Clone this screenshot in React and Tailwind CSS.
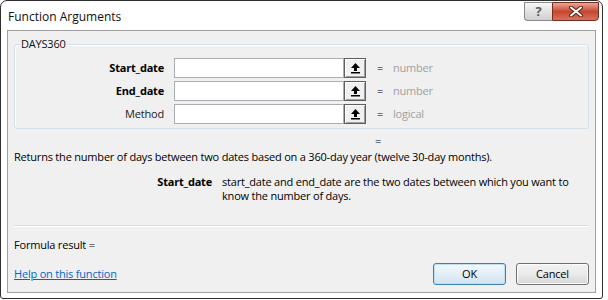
import React from "react";

const UpArrow = () => (
  <svg width="9" height="11" viewBox="0 0 9 11">
    <path d="M4.5 0 L9 5 H6 V8 H3 V5 H0 Z" fill="#000" />
    <rect x="0" y="9" width="9" height="1.5" fill="#000" />
  </svg>
);

const ArgRow = ({ label, bold, value }) => (
  <div className="flex items-center h-[20px]">
    <div className={`w-[149px] text-right ${bold ? "font-bold" : "text-[#222]"}`}>{label}</div>
    <div className="ml-[10px] w-[170px] h-[20px] border border-[#abadb3] bg-white"></div>
    <div className="w-[22px] h-[20px] border border-[#5f5f5f] bg-[#f0f0f0] shadow-[inset_1px_1px_0_#fff,inset_-1px_-1px_0_#a0a0a0] flex items-center justify-center">
      <UpArrow />
    </div>
    <div className="ml-[11px] w-[6px] text-center">=</div>
    <div className="ml-[10px] text-[#a0a0a0]">{value}</div>
  </div>
);

export default function App() {
  return (
    <div className="w-[608px] h-[300px] bg-white font-[family-name:'Open_Sans',sans-serif] text-[11px] tracking-[-0.2px] text-black leading-[14px]">
      <div className="w-[603px] h-[299px] border border-[#2f2f2f] rounded-t-[7px] rounded-b-[3px] bg-white flex flex-col">
        {/* Title bar */}
        <div className="h-[29px] flex items-start justify-between">
          <div className="pl-[7px] pt-[9px] text-[12px] tracking-normal text-[#111]">Function Arguments</div>
          <div className="flex mr-[3px] mt-[1px]">
            <div className="w-[28px] h-[19px] border border-[#8a8a8a] border-r-0 rounded-bl-[4px] bg-gradient-to-b from-[#f7f7f7] via-[#e2e2e2] to-[#cfcfcf] flex items-center justify-center text-[13px] font-bold text-[#5a5a5a] leading-none">
              ?
            </div>
            <div className="w-[47px] h-[19px] border border-[#7a2b20] rounded-br-[4px] bg-gradient-to-b from-[#e9a696] via-[#c8452f] to-[#d5725c] flex items-center justify-center">
              <svg width="14" height="11" viewBox="0 0 14 11">
                <path d="M2 1.5 L12 9.5 M12 1.5 L2 9.5" stroke="#5b2118" strokeWidth="4" strokeLinecap="round" />
                <path d="M2 1.5 L12 9.5 M12 1.5 L2 9.5" stroke="#fff" strokeWidth="2" strokeLinecap="round" />
              </svg>
            </div>
          </div>
        </div>

        {/* Client area */}
        <div className="mx-[6px] h-[263px] border border-[#a0a0a0] bg-[#f0f0f0] px-[6px] flex flex-col">
          <fieldset className="mt-[6px] border border-[#d5dfe5] rounded-[3px] pb-[4px] shadow-[inset_1px_1px_0_#fff]">
            <legend className="ml-[5px] px-[1px] text-[#111]">DAYS360</legend>
            <div className="flex flex-col gap-[3px] pt-[7px]">
              <ArgRow label="Start_date" bold value="number" />
              <ArgRow label="End_date" bold value="number" />
              <ArgRow label="Method" value="logical" />
            </div>
          </fieldset>

          <div className="mt-[5px] pl-[361px]">=</div>
          <div className="mt-[2px]">
            Returns the number of days between two dates based on a 360-day year (twelve 30-day months).
          </div>
          <div className="mt-[11px] flex">
            <div className="w-[198px] text-right font-bold">Start_date</div>
            <div className="ml-[10px]">
              start_date and end_date are the two dates between which you want to
              <br />
              know the number of days.
            </div>
          </div>

          <div className="mt-[22px] h-[2px] border-t border-[#d5dfe5] border-b border-b-white"></div>

          <div className="mt-[11px]">Formula result =</div>

          <div className="mt-auto mb-[7px] flex items-center justify-between">
            <a href="#" className="text-[#0066cc] underline">Help on this function</a>
            <div className="flex gap-[10px]">
              <button className="w-[73px] h-[22px] border border-[#3c7fb1] rounded-[3px] bg-gradient-to-b from-[#f4f9fc] via-[#e3eef7] to-[#cfe3f1] shadow-[inset_0_0_0_1px_#bfe0f3]">
                OK
              </button>
              <button className="w-[73px] h-[22px] border border-[#707070] rounded-[3px] bg-gradient-to-b from-[#f2f2f2] via-[#ebebeb] to-[#d6d6d6] shadow-[inset_0_0_0_1px_#fcfcfc]">
                Cancel
              </button>
            </div>
          </div>
        </div>
      </div>
    </div>
  );
}
